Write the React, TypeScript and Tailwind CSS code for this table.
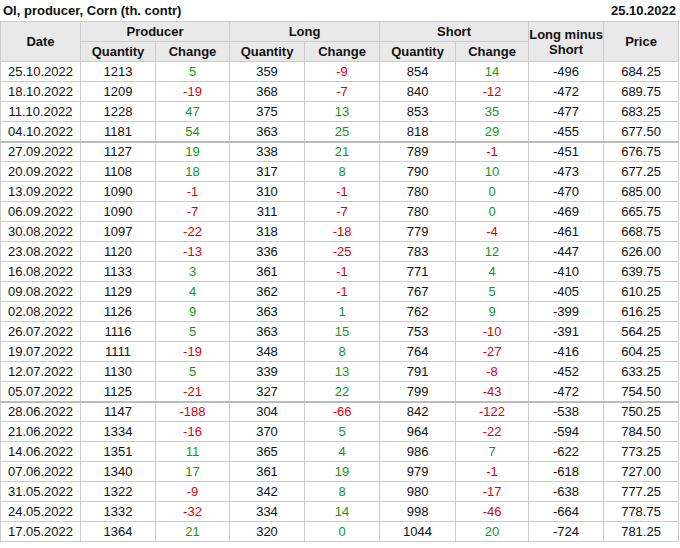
const ROWS: [string, number, number, number, number, number, number, number, string][] = [
  ['25.10.2022', 1213, 5, 359, -9, 854, 14, -496, '684.25'],
  ['18.10.2022', 1209, -19, 368, -7, 840, -12, -472, '689.75'],
  ['11.10.2022', 1228, 47, 375, 13, 853, 35, -477, '683.25'],
  ['04.10.2022', 1181, 54, 363, 25, 818, 29, -455, '677.50'],
  ['27.09.2022', 1127, 19, 338, 21, 789, -1, -451, '676.75'],
  ['20.09.2022', 1108, 18, 317, 8, 790, 10, -473, '677.25'],
  ['13.09.2022', 1090, -1, 310, -1, 780, 0, -470, '685.00'],
  ['06.09.2022', 1090, -7, 311, -7, 780, 0, -469, '665.75'],
  ['30.08.2022', 1097, -22, 318, -18, 779, -4, -461, '668.75'],
  ['23.08.2022', 1120, -13, 336, -25, 783, 12, -447, '626.00'],
  ['16.08.2022', 1133, 3, 361, -1, 771, 4, -410, '639.75'],
  ['09.08.2022', 1129, 4, 362, -1, 767, 5, -405, '610.25'],
  ['02.08.2022', 1126, 9, 363, 1, 762, 9, -399, '616.25'],
  ['26.07.2022', 1116, 5, 363, 15, 753, -10, -391, '564.25'],
  ['19.07.2022', 1111, -19, 348, 8, 764, -27, -416, '604.25'],
  ['12.07.2022', 1130, 5, 339, 13, 791, -8, -452, '633.25'],
  ['05.07.2022', 1125, -21, 327, 22, 799, -43, -472, '754.50'],
  ['28.06.2022', 1147, -188, 304, -66, 842, -122, -538, '750.25'],
  ['21.06.2022', 1334, -16, 370, 5, 964, -22, -594, '784.50'],
  ['14.06.2022', 1351, 11, 365, 4, 986, 7, -622, '773.25'],
  ['07.06.2022', 1340, 17, 361, 19, 979, -1, -618, '727.00'],
  ['31.05.2022', 1322, -9, 342, 8, 980, -17, -638, '777.25'],
  ['24.05.2022', 1332, -32, 334, 14, 998, -46, -664, '778.75'],
  ['17.05.2022', 1364, 21, 320, 0, 1044, 20, -724, '781.25'],
];

const GROUP_START = ['27.09.2022', '28.06.2022'];

function Change({ v }: { v: number }) {
  return <span className={v < 0 ? 'text-[#dd0000]' : 'text-[#119911]'}>{v}</span>;
}

export default function App() {
  const th = 'border border-[#cccccc] bg-[#e9e9e9] font-bold text-center p-0';
  const td = 'border border-[#cccccc] text-center p-0 h-[20px]';
  return (
    <div className="w-[680px] h-[548px] bg-white text-[#111] font-['Liberation_Sans',Arial,sans-serif] overflow-hidden">
      <div className="flex justify-between items-center h-[21px] pl-[3px] pr-[4px] text-[13px] font-bold">
        <span>OI, producer, Corn (th. contr)</span>
        <span>25.10.2022</span>
      </div>
      <table className="border-collapse table-fixed w-[678px] text-[13px] leading-[15px]">
        <colgroup>
          <col className="w-[80px]" />
          <col className="w-[75px]" />
          <col className="w-[74px]" />
          <col className="w-[75px]" />
          <col className="w-[75px]" />
          <col className="w-[76px]" />
          <col className="w-[73px]" />
          <col className="w-[75px]" />
          <col className="w-[75px]" />
        </colgroup>
        <thead>
          <tr className="h-[20px]">
            <th rowSpan={2} className={th}>Date</th>
            <th colSpan={2} className={th}>Producer</th>
            <th colSpan={2} className={th}>Long</th>
            <th colSpan={2} className={th}>Short</th>
            <th rowSpan={2} className={th}>Long minus<br />Short</th>
            <th rowSpan={2} className={th}>Price</th>
          </tr>
          <tr className="h-[20px]">
            <th className={th}>Quantity</th>
            <th className={th}>Change</th>
            <th className={th}>Quantity</th>
            <th className={th}>Change</th>
            <th className={th}>Quantity</th>
            <th className={th}>Change</th>
          </tr>
        </thead>
        <tbody>
          {ROWS.map((r) => (
            <tr
              key={r[0]}
              className={GROUP_START.includes(r[0]) ? 'border-t-2 border-t-[#bbbbbb]' : ''}
            >
              <td className={td}>{r[0]}</td>
              <td className={td}>{r[1]}</td>
              <td className={td}><Change v={r[2]} /></td>
              <td className={td}>{r[3]}</td>
              <td className={td}><Change v={r[4]} /></td>
              <td className={td}>{r[5]}</td>
              <td className={td}><Change v={r[6]} /></td>
              <td className={td}>{r[7]}</td>
              <td className={td}>{r[8]}</td>
            </tr>
          ))}
        </tbody>
      </table>
    </div>
  );
}
